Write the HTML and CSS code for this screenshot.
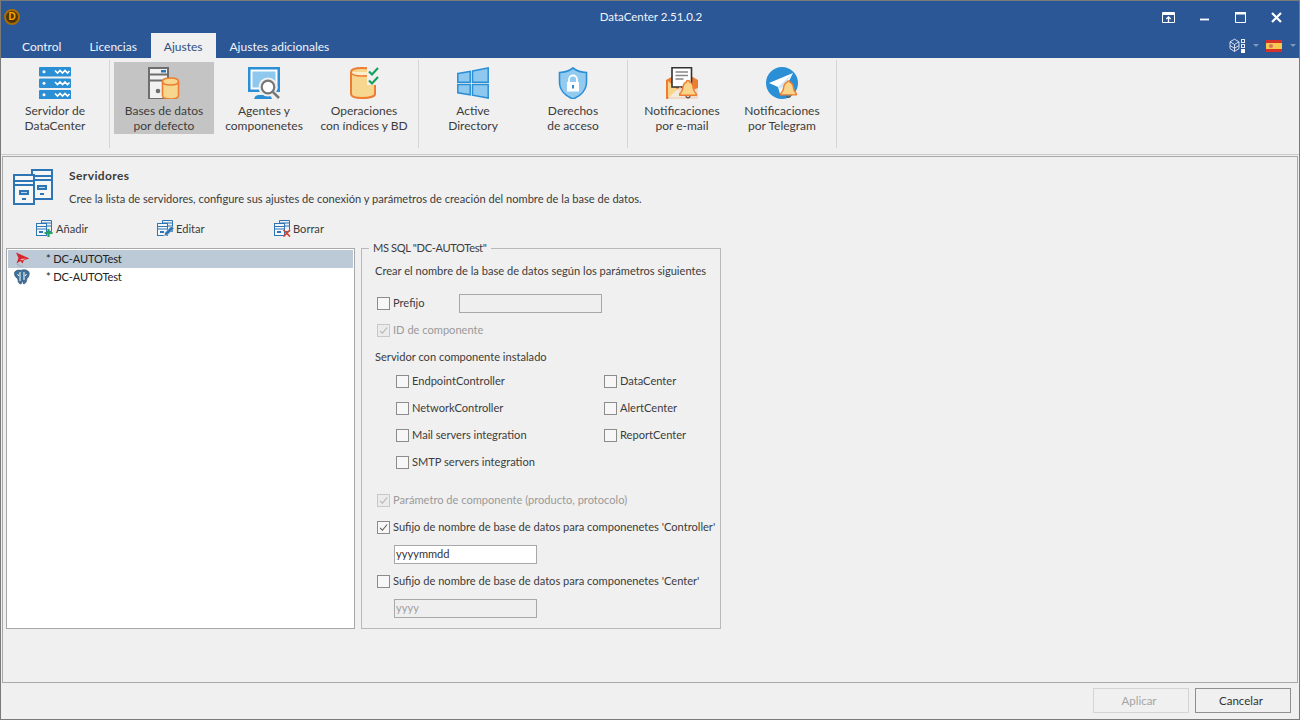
FILE: index.html
```html
<!DOCTYPE html>
<html lang="es">
<head>
<meta charset="utf-8">
<title>DataCenter 2.51.0.2</title>
<link rel="stylesheet" href="styles.css">
</head>
<body>
<svg class="defs" width="0" height="0">
  <defs>
    <symbol id="check" viewBox="0 0 13 13"><path d="M2.500 7 L5.200 9.800 L10.800 3" fill="none" stroke="currentColor" stroke-width="1.200"/></symbol>
    <symbol id="form" viewBox="0 0 16 16">
      <path d="M5.500 .5h10v11H11" fill="none" stroke="#2e75b6"/>
      <path d="M5.500 .5v3M6 3h9M11 6h4" stroke="#2e75b6" fill="none"/>
      <rect x=".5" y="3.500" width="10" height="12" fill="#f4f8fc" stroke="#2e75b6"/>
      <path d="M1 6.500h9M1 9h9" stroke="#2e75b6"/>
      <rect x="3" y="11" width="4" height="2" fill="#2e75b6"/>
    </symbol>
    <symbol id="bell" viewBox="0 0 20 20">
      <path d="M10 1.500c-1 0-1.600.7-1.700 1.600C5.600 4 5 6.500 4.800 9c-.2 2.600-1.200 4.200-3 5.800v1.400h16.400v-1.400c-1.800-1.600-2.800-3.200-3-5.800-.2-2.500-.8-5-3.500-5.900-.1-.9-.7-1.600-1.700-1.600z" fill="#f9d48b" stroke="#ed7d31" stroke-width="1.500"/>
      <path d="M7.800 17.200a2.300 2.300 0 0 0 4.400 0" fill="none" stroke="#555" stroke-width="1.400"/>
    </symbol>
  </defs>
</svg>
<div class="window">
  <header class="titlebar">
    <div class="title-left"><span class="logo"><span class="logo-d">D</span></span></div>
    <div class="title-text">DataCenter 2.51.0.2</div>
    <div class="win-controls">
      <svg class="wc wc-tray" viewBox="0 0 13 11"><path d="M.5.500h12v10H.5zM.5 2.500h12" fill="none" stroke="#fff"/><path d="M.5 1.500h12" stroke="#fff"/><path d="M6.500 10V5M4.300 7l2.200-2.200L8.700 7" fill="none" stroke="#fff" stroke-width="1.300"/></svg>
      <svg class="wc wc-min" viewBox="0 0 10 3"><rect width="10" height="2" y=".5" fill="#fff"/></svg>
      <svg class="wc wc-max" viewBox="0 0 11 11"><path d="M.5.500h10v10H.5z" fill="none" stroke="#fff"/><rect width="11" height="2.500" fill="#fff"/></svg>
      <svg class="wc wc-close" viewBox="0 0 11 11"><path d="M1 1l9 9M10 1l-9 9" stroke="#fff" stroke-width="2.200"/></svg>
    </div>
  </header>
  <nav class="tabbar">
    <div class="tabs">
      <span class="tab">Control</span>
      <span class="tab">Licencias</span>
      <span class="tab tab-active">Ajustes</span>
      <span class="tab">Ajustes adicionales</span>
    </div>
    <div class="tab-tools">
      <svg class="cube" viewBox="0 0 17 15">
        <path d="M1 3.800 5.500 1.200 10 3.800v6.700L5.500 13.500 1 10.500zM1 3.800l4.500 2.700L10 3.800M5.500 6.500v7M1 7.500l4.500 2.800L10 7.500" fill="none" stroke="#e6ecf5" stroke-width=".9"/>
        <rect x="12.500" y="1.500" width="3" height="3" fill="none" stroke="#e6ecf5"/><rect x="12.500" y="6.500" width="3" height="3" fill="none" stroke="#e6ecf5"/><rect x="12" y="11" width="4" height="4" fill="#fff"/>
      </svg>
      <span class="caret"></span>
      <span class="flag"><span class="flag-crest"></span></span>
      <span class="caret"></span>
    </div>
  </nav>
  <section class="ribbon">
    <div class="rgroup">
      <div class="ritem">
        <svg class="ricon" viewBox="0 0 32 32">
          <g fill="#2b8fd6"><rect y="0" width="32" height="9.500" rx="1"/><rect y="11.500" width="32" height="9.500" rx="1"/><rect y="23" width="32" height="9.500" rx="1"/></g>
          <g fill="#fff"><circle cx="5" cy="4.800" r="1.500"/><circle cx="5" cy="16.300" r="1.500"/><circle cx="5" cy="27.800" r="1.500"/></g>
          <g fill="none" stroke="#fff" stroke-width="1.600"><path d="M16 3.500l2.500 2.500 2.500-2.500 2.500 2.500 2.500-2.500 2.500 2.500 2-2"/><path d="M16 15l2.500 2.500 2.500-2.500 2.500 2.500 2.500-2.500 2.500 2.500 2-2"/><path d="M16 26.500l2.500 2.500 2.500-2.500 2.500 2.500 2.500-2.500 2.500 2.500 2-2"/></g>
        </svg>
        <span class="rlabel">Servidor de<br>DataCenter</span>
      </div>
    </div>
    <div class="rgroup">
      <div class="ritem ritem-on">
        <svg class="ricon" viewBox="0 0 32 32">
          <path d="M1 1h19v31H1z" fill="#f2f2f2" stroke="#6e6e6e" stroke-width="2"/>
          <path d="M1 7.500h19M1 13.500h19" stroke="#6e6e6e" stroke-width="2"/>
          <rect x="13" y="3" width="5" height="2.500" fill="#2e75b6"/>
          <circle cx="10" cy="24" r="2.300" fill="#6e6e6e"/>
          <path d="M14.500 14.500c0-2 3-3.500 8-3.500s8 1.500 8 3.500V28.500c0 2-3 3.500-8 3.500s-8-1.500-8-3.500z" fill="#f7d68f" stroke="#ed7d31" stroke-width="1.600"/>
          <path d="M14.500 14.500c0 2 3 3.500 8 3.500s8-1.500 8-3.500" fill="none" stroke="#ed7d31" stroke-width="1.600"/>
        </svg>
        <span class="rlabel">Bases de datos<br>por defecto</span>
      </div>
      <div class="ritem">
        <svg class="ricon" viewBox="0 0 32 32">
          <path d="M0 0h32v25H0z" fill="#2b8fd6"/>
          <path d="M2.500 2.500h27v20h-27z" fill="#fff"/>
          <path d="M4.500 4.500h23v16h-23z" fill="#8ec8ef"/>
          <path d="M6 32c1-3 2-4 5-4h8c3 0 4 1 5 4z" fill="#2b8fd6"/>
          <circle cx="20" cy="20" r="9.500" fill="#f0f0f0"/>
          <circle cx="20" cy="20" r="6.300" fill="#fff" stroke="#777" stroke-width="2.200"/>
          <path d="M24.800 24.800 31 31" stroke="#777" stroke-width="2.600"/>
        </svg>
        <span class="rlabel">Agentes y<br>componenetes</span>
      </div>
      <div class="ritem">
        <svg class="ricon" viewBox="0 0 32 32">
          <path d="M3 5c0-2.500 4-4 11-4s13 1.500 13 4v22c0 2.500-6 4-13 4S3 29.500 3 27z" fill="#f7d68f" stroke="#ed7d31" stroke-width="2"/>
          <path d="M3 5c0 2.500 4 4 11 4s13-1.500 13-4" fill="#fbeecb" stroke="#ed7d31" stroke-width="1.600"/>
          <path d="M19 0h13v18H19z" fill="#f0f0f0"/>
          <path d="M21 4.500l3 3 6-6.500M21 13.500l3 3 6-6.500" fill="none" stroke="#17a05d" stroke-width="2.200"/>
        </svg>
        <span class="rlabel">Operaciones<br>con índices y BD</span>
      </div>
    </div>
    <div class="rgroup">
      <div class="ritem">
        <svg class="ricon" viewBox="0 0 32 32">
          <g fill="#8ec8ef" stroke="#2b8fd6" stroke-width="1.500">
            <path d="M.8 6.500 13.200 4.500v10.700H.8z"/><path d="M15.500 4.100 31.200 1v14.200H15.500z"/>
            <path d="M.8 17.500h12.400v10.300L.8 25.800z"/><path d="M15.500 17.500h15.700V31l-15.700-2.800z"/>
          </g>
        </svg>
        <span class="rlabel">Active<br>Directory</span>
      </div>
      <div class="ritem">
        <svg class="ricon" viewBox="0 0 32 32">
          <path d="M16 1C12 4 7 5.500 2.500 5.500V15c0 8 6 14 13.500 17C23.500 29 29.500 23 29.500 15V5.500C25 5.500 20 4 16 1z" fill="#93caef" stroke="#2b8fd6" stroke-width="1.600"/>
          <path d="M12 15v-2.500a4 4 0 0 1 8 0V15" fill="none" stroke="#fff" stroke-width="1.800"/>
          <rect x="10" y="15" width="12" height="9.500" fill="#fff"/>
          <rect x="15" y="18" width="2" height="3.500" fill="#2b8fd6"/>
        </svg>
        <span class="rlabel">Derechos<br>de acceso</span>
      </div>
    </div>
    <div class="rgroup">
      <div class="ritem">
        <svg class="ricon" viewBox="0 0 32 32">
          <path d="M0 13 16 4l16 9v19H0z" fill="#ed7d31"/>
          <path d="M2 14v16h18z" fill="#f9d48b"/>
          <path d="M6 .8h19.500V20H6z" fill="#fff" stroke="#333" stroke-width="1.600"/>
          <path d="M9.500 5h12.500M9.500 8.500h12.500M9.500 12h8" stroke="#888" stroke-width="1.500"/>
          <path d="M2 31 14 20l6 5 12-4v11H2z" fill="#f0f0f0" opacity=".8"/>
          <use href="#bell" x="12" y="12" width="20" height="20"/>
        </svg>
        <span class="rlabel">Notificaciones<br>por e-mail</span>
      </div>
      <div class="ritem">
        <svg class="ricon" viewBox="0 0 32 32">
          <circle cx="16" cy="16" r="16" fill="#2b8fd6"/>
          <path d="M3 16 27 6 21 18 14 27 12 20z" fill="#fff"/>
          <path d="M12 20 27 6 15 22z" fill="#cfe6f7"/>
          <use href="#bell" x="13" y="12" width="19" height="20"/>
        </svg>
        <span class="rlabel">Notificaciones<br>por Telegram</span>
      </div>
    </div>
  </section>
  <main class="panel">
    <div class="panel-head">
      <svg class="head-icon" viewBox="0 0 40 36">
        <rect x="19" y="1" width="20" height="29" fill="#f6f6f6" stroke="#2e75b6" stroke-width="2"/>
        <path d="M19 7h20M19 11h20" stroke="#2e75b6" stroke-width="2"/>
        <rect x="24" y="16" width="10" height="5" fill="#2e75b6"/>
        <rect x="26" y="18" width="6" height="1" fill="#bcd6ee"/>
        <rect x="27" y="24" width="4" height="2" fill="#2e75b6"/>
        <rect x="1" y="6" width="20" height="29" fill="#f6f6f6" stroke="#2e75b6" stroke-width="2"/>
        <path d="M1 12h20M1 16h20" stroke="#2e75b6" stroke-width="2"/>
        <rect x="6" y="21" width="10" height="5" fill="#2e75b6"/>
        <rect x="8" y="23" width="6" height="1" fill="#bcd6ee"/>
        <rect x="9" y="29" width="4" height="2" fill="#2e75b6"/>
      </svg>
      <div class="head-text">
        <div class="head-title">Servidores</div>
        <div class="head-sub">Cree la lista de servidores, configure sus ajustes de conexión y parámetros de creación del nombre de la base de datos.</div>
      </div>
    </div>
    <div class="toolbar">
      <span class="tbtn tbtn-add">
        <svg class="ticon" viewBox="0 0 17 17"><use href="#form" width="16" height="16"/><path d="M12.500 9v8M8.500 13h8" stroke="#21a366" stroke-width="2.200"/></svg>Añadir
      </span>
      <span class="tbtn tbtn-edit">
        <svg class="ticon" viewBox="0 0 17 17"><use href="#form" width="16" height="16"/><path d="M7 16l1-3.500L14.500 6l2.500 2.500L10.500 15z" fill="#2e75b6" stroke="#f0f0f0" stroke-width=".6"/></svg>Editar
      </span>
      <span class="tbtn tbtn-del">
        <svg class="ticon" viewBox="0 0 17 17"><use href="#form" width="16" height="16"/><path d="M9.500 10l6.500 6.500M16 10l-6.500 6.500" stroke="#d8432e" stroke-width="1.700"/></svg>Borrar
      </span>
    </div>
    <div class="work">
      <div class="server-list">
        <div class="srow srow-on">
          <svg class="sicon" viewBox="0 0 16 16">
            <path d="M2 1.500 15.500 7.500 10 9 8.500 12.500 6.500 10 2.500 12.500 4.500 7z" fill="#d8232a"/>
            <path d="M6 8 12 7.500 8 9.500z" fill="#f2b8b8"/>
            <path d="M3.500 13c1 1.500 2.500 2.500 5 2.500" fill="none" stroke="#a8a8a8" stroke-width="1.600" stroke-dasharray="1.500 1"/>
          </svg>
          <span class="sname">* DC-AUTOTest</span>
        </div>
        <div class="srow">
          <svg class="sicon" viewBox="0 0 16 16">
            <path d="M.5 3.500c1.500-2.500 4.500-3 6.500-2 2-1.500 6-1 8 1.500.8 2.500-.3 5-2 6.500l-.5 2.500c-.5 2-2 3-3 3L8.500 11.500 7 15c-2 0-3-2-3-4L3.500 9.500C1.500 8.500 0 6 .5 3.500z" fill="#3f7198" stroke="#234a6e" stroke-width=".6"/>
            <path d="M6 3v9M10 3v8M3.500 5l1.500 2M12.500 5 11 7" stroke="#fff" stroke-width="1"/>
          </svg>
          <span class="sname">* DC-AUTOTest</span>
        </div>
      </div>
      <div class="mssql">
        <span class="mssql-title">MS SQL "DC-AUTOTest"</span>
        <div class="frow">Crear el nombre de la base de datos según los parámetros siguientes</div>
        <div class="frow frow-prefix">
          <span class="cb"></span><span class="prefix-label">Prefijo</span>
          <span class="field field-off"></span>
        </div>
        <div class="frow off"><span class="cb cb-off"><svg class="chk"><use href="#check"/></svg></span>ID de componente</div>
        <div class="frow">Servidor con componente instalado</div>
        <div class="comp-grid">
          <div class="frow"><span class="cb"></span>EndpointController</div>
          <div class="frow"><span class="cb"></span>DataCenter</div>
          <div class="frow"><span class="cb"></span>NetworkController</div>
          <div class="frow"><span class="cb"></span>AlertCenter</div>
          <div class="frow"><span class="cb"></span>Mail servers integration</div>
          <div class="frow"><span class="cb"></span>ReportCenter</div>
          <div class="frow"><span class="cb"></span>SMTP servers integration</div>
        </div>
        <div class="frow off frow-param"><span class="cb cb-off"><svg class="chk"><use href="#check"/></svg></span>Parámetro de componente (producto, protocolo)</div>
        <div class="frow"><span class="cb"><svg class="chk"><use href="#check"/></svg></span>Sufijo de nombre de base de datos para componenetes 'Controller'</div>
        <div class="frow frow-field"><span class="field">yyyymmdd</span></div>
        <div class="frow"><span class="cb"></span>Sufijo de nombre de base de datos para componenetes 'Center'</div>
        <div class="frow frow-field"><span class="field field-off">yyyy</span></div>
      </div>
    </div>
  </main>
  <footer class="footer">
    <span class="btn btn-off">Aplicar</span>
    <span class="btn">Cancelar</span>
  </footer>
</div>
</body>
</html>
```
FILE: styles.css
```css
* { box-sizing: border-box; }
html, body { margin: 0; padding: 0; }
body { width: 1300px; height: 720px; overflow: hidden; font-family: Lato, "Liberation Sans", sans-serif; font-size: 12px; color: #3c3c3c; }
.defs { position: absolute; }
.window { width: 1300px; height: 720px; display: flex; flex-direction: column; border: 1px solid #7a7a7a; background: #f0f0f0; }

.titlebar { height: 32px; flex: none; background: #2b5797; display: grid; grid-template-columns: 1fr auto 1fr; align-items: center; color: #fff; }
.title-left { display: flex; padding-left: 3px; }
.logo { width: 16px; height: 16px; border-radius: 50%; background: #4f3306; border: 2px solid #a86c04; display: flex; align-items: center; justify-content: center; }
.logo-d { font: bold 10px/1 "Liberation Sans", sans-serif; color: #f4a900; }
.title-text { font-size: 11.500px; color: #f2f4f8; padding-left: 2px; margin-top: -1px; }
.win-controls { display: flex; justify-content: flex-end; align-items: center; }
.wc { display: block; flex: none; }
.wc-tray { width: 13px; height: 11px; }
.wc-min { width: 9px; height: 3px; margin-left: 25px; margin-top: 4px; }
.wc-max { width: 11px; height: 11px; margin-left: 26px; }
.wc-close { width: 11px; height: 11px; margin-left: 25px; margin-right: 17px; }

.tabbar { height: 25px; flex: none; background: #2b5797; display: flex; justify-content: space-between; padding-left: 8px; }
.tabs { display: flex; }
.tab { padding: 0 13px; margin-right: 1px; line-height: 27px; color: #f0f3f8; font-size: 12px; }
.tab:first-child { padding-right: 14px; }
.tab-active { background: #f0f0f0; color: #2f4f7f; }
.tab-tools { display: flex; align-items: center; padding-right: 3px; }
.cube { width: 17px; height: 15px; margin-right: 7px; }
.caret { width: 0; height: 0; border: 3px solid transparent; border-top: 3px solid #7f99bd; border-bottom: 0; }
.flag { width: 16px; height: 12px; margin: 0 8px 0 7px; background: linear-gradient(#d5312a 0 25%, #f6c94d 25% 75%, #d5312a 75%); display: flex; align-items: center; padding-left: 3px; }
.flag-crest { width: 4px; height: 4px; border-radius: 50%; background: #d8706a; }

.ribbon { height: 97px; flex: none; display: flex; padding-top: 4px; border-bottom: 1px solid #c9c9c9; align-items: flex-start; }
.rgroup { display: flex; height: 88px; padding: 0 4px; border-right: 1px solid #d5d5d5; margin-top: -2px; padding-top: 2px; }
.ritem { width: 100px; height: 72px; display: flex; flex-direction: column; align-items: center; padding-top: 5px; }
.ritem-on { background: #c4c4c4; }
.ricon { width: 32px; height: 32px; flex: none; }
.rlabel { margin-top: 4px; line-height: 15px; text-align: center; }

.panel { flex: 1; margin: 1px 1px 0; border: 1px solid #a8a8a8; padding: 0 3px; display: flex; flex-direction: column; background: #f0f0f0; font-size: 11.100px; }
.panel-head { display: flex; height: 60px; padding: 12px 0 0 7px; }
.head-icon { width: 40px; height: 36px; flex: none; }
.head-text { margin-left: 16px; margin-top: -4px; }
.head-title { font-weight: 700; line-height: 15px; margin-top: 3px; font-size: 12px; letter-spacing: .4px; }
.head-sub { line-height: 15px; margin-top: 8px; }
.toolbar { display: flex; height: 31px; padding-bottom: 8px; align-items: center; }
.tbtn { display: flex; align-items: center; }
.tbtn-add { margin-left: 30px; width: 121px; }
.tbtn-edit { width: 117px; }
.ticon { width: 17px; height: 17px; margin-right: 2px; flex: none; }
.tbtn-add .ticon { margin-right: 3px; }
.work { display: flex; gap: 6px; }
.server-list { width: 349px; height: 381px; background: #fff; border: 1px solid #a8a8a8; padding: 1px; }
.srow { height: 18px; display: flex; align-items: center; padding-left: 6px; color: #222; }
.srow-on { background: #bccad8; }
.sicon { width: 16px; height: 16px; flex: none; }
.sname { margin-left: 16px; padding-bottom: 2px; letter-spacing: -.15px; }
.mssql { position: relative; width: 360px; height: 381px; border: 1px solid #b9b9b9; padding: 9px 13px 0; }
.mssql-title { position: absolute; left: 7px; top: -9px; padding: 0 4px; background: #f0f0f0; line-height: 15px; letter-spacing: -.35px; }
.frow { height: 27px; padding-bottom: 2px; display: flex; align-items: center; white-space: nowrap; }
.frow-prefix { margin-top: 5px; }
.prefix-label { width: 66px; }
.cb { width: 13px; height: 13px; margin: 2px 3px 0 2px; border: 1px solid #8c8c8c; background: #f7f7f7; flex: none; color: #555; display: block; }
.cb-off { border-color: #c8c8c8; background: #ebebeb; color: #b0b0b0; }
.chk { width: 11px; height: 11px; display: block; }
.off { color: #9a9a9a; }
.comp-grid { display: grid; grid-template-columns: 208px 1fr; margin: -3px 0 0 19px; }
.frow-param { margin-top: 11px; }
.frow-field { padding-left: 19px; padding-bottom: 0; }
.field { width: 143px; height: 19px; border: 1px solid #a8a8a8; background: #fff; line-height: 16px; padding-left: 1px; color: #333; }
.frow-prefix .field { margin-top: 2px; }
.field-off { background: #efefef; color: #a0a0a0; }

.footer { height: 36px; flex: none; display: flex; justify-content: flex-end; gap: 6px; padding: 5px 8px 0 0; font-size: 11.500px; }
.btn { width: 96px; height: 25px; border: 1px solid #8f8f8f; text-align: center; line-height: 23px; color: #333; padding-right: 4px; }
.btn-off { border-color: #d4d4d4; color: #a5a5a5; }
```
